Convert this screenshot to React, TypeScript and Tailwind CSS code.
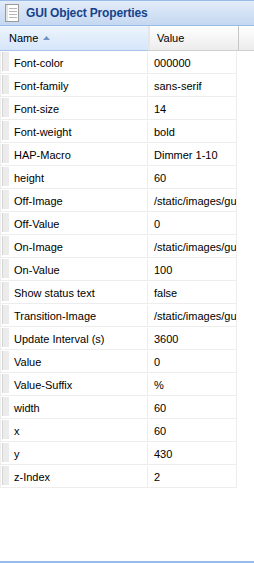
import React from 'react';

const props: [string, string][] = [
  ['Font-color', '000000'],
  ['Font-family', 'sans-serif'],
  ['Font-size', '14'],
  ['Font-weight', 'bold'],
  ['HAP-Macro', 'Dimmer 1-10'],
  ['height', '60'],
  ['Off-Image', '/static/images/gui/off.png'],
  ['Off-Value', '0'],
  ['On-Image', '/static/images/gui/on.png'],
  ['On-Value', '100'],
  ['Show status text', 'false'],
  ['Transition-Image', '/static/images/gui/dim.png'],
  ['Update Interval (s)', '3600'],
  ['Value', '0'],
  ['Value-Suffix', '%'],
  ['width', '60'],
  ['x', '60'],
  ['y', '430'],
  ['z-Index', '2'],
];

function PageIcon() {
  return (
    <svg width="14" height="18" viewBox="0 0 14 18">
      <rect x="0.5" y="0.5" width="13" height="17" fill="#fff" stroke="#9a9a9a" />
      <rect x="1" y="1" width="2" height="16" fill="#e4e4e4" />
      <line x1="4" y1="4.5" x2="12" y2="4.5" stroke="#b8b8b8" />
      <line x1="4" y1="7.5" x2="12" y2="7.5" stroke="#b8b8b8" />
      <line x1="4" y1="10.5" x2="12" y2="10.5" stroke="#b8b8b8" />
      <line x1="4" y1="13.5" x2="12" y2="13.5" stroke="#b8b8b8" />
    </svg>
  );
}

function Row({ name, value }: { name: string; value: string }) {
  return (
    <div className="flex h-[23px] w-[237px] border border-[#ededed] border-t-white">
      <div className="flex w-[147px] shrink-0 items-center border-r border-[#ededed]">
        <div className="ml-[1px] h-[19px] w-[7px] self-start border-l border-[#d4d4d4] bg-[#ebebeb]" />
        <span className="ml-[5px] whitespace-nowrap pt-[1px] text-[11px] text-black">{name}</span>
      </div>
      <div className="flex flex-1 items-center overflow-hidden pl-[6px]">
        <span className="whitespace-nowrap pt-[1px] text-[11px] text-black">{value}</span>
      </div>
    </div>
  );
}

export default function App() {
  return (
    <div className="flex h-[563px] w-[254px] flex-col overflow-hidden bg-white font-['Liberation_Sans',Arial,sans-serif]">
      {/* Panel title */}
      <div className="flex h-[26px] shrink-0 items-center gap-[7px] border-t border-b border-[#99bbe8] bg-gradient-to-b from-[#e3ecf8] via-[#d3e2f5] to-[#c5d8f1] pl-[5px]">
        <PageIcon />
        <span className="text-[12px] font-bold tracking-[-0.15px] text-[#15428b]">GUI Object Properties</span>
      </div>

      {/* Column headers */}
      <div className="flex h-[25px] shrink-0">
        <div className="flex w-[148px] items-center gap-[5px] border-b border-[#a6c3ec] bg-gradient-to-b from-[#edf4fd] to-[#d6e6fa] pl-[9px]">
          <span className="text-[11px] text-black">Name</span>
          <svg width="7" height="4" viewBox="0 0 7 4">
            <path d="M0 4 L3.5 0 L7 4 Z" fill="#7592c4" />
          </svg>
        </div>
        <div className="w-[2px] border-b border-[#d0d0d0] bg-[#e6e6e6]" />
        <div className="flex w-[88px] items-center border-b border-[#d0d0d0] bg-gradient-to-b from-white to-[#ececec] pl-[7px]">
          <span className="text-[11px] text-black">Value</span>
        </div>
        <div className="w-[1px] border-b border-[#d0d0d0] bg-[#c6c6c6]" />
        <div className="flex-1 border-b border-[#d0d0d0] bg-gradient-to-b from-white to-[#ececec]" />
      </div>

      {/* Property rows */}
      <div className="flex flex-1 flex-col">
        {props.map(([n, v]) => (
          <Row key={n} name={n} value={v} />
        ))}
      </div>

      <div className="h-[2px] shrink-0 bg-[#99bbe8]" />
    </div>
  );
}
